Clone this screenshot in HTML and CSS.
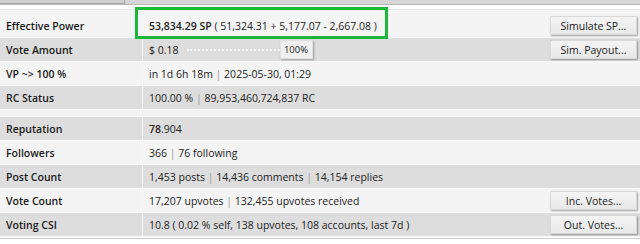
FILE: index.html
```html
<!DOCTYPE html>
<html>
<head>
<meta charset="utf-8">
<link rel="stylesheet" href="styles.css">
</head>
<body>
<div class="page">
  <div class="topbar"><div class="tab"></div></div>
  <div class="topgap"></div>
  <div class="table first">
    <div class="row light">
      <div class="label">Effective Power</div>
      <div class="value"><b>53,834.29 SP</b> ( 51,324.31 + 5,177.07 - 2,667.08 )</div>
      <div class="action"><button class="btn">Simulate SP...</button></div>
    </div>
    <div class="row dark">
      <div class="label">Vote Amount</div>
      <div class="value"><span>$ 0.18</span>
        <div class="slider"><div class="track"></div><div class="thumb">100%</div></div>
      </div>
      <div class="action"><button class="btn">Sim. Payout...</button></div>
    </div>
    <div class="row light">
      <div class="label">VP ~&gt; 100 %</div>
      <div class="value">in 1d 6h 18m <span class="sep">|</span> 2025-05-30, 01:29</div>
      <div class="action"></div>
    </div>
    <div class="row dark">
      <div class="label">RC Status</div>
      <div class="value">100.00 % <span class="sep">|</span> 89,953,460,724,837 RC</div>
      <div class="action"></div>
    </div>
  </div>
  <div class="spacer"></div>
  <div class="table">
    <div class="row dark">
      <div class="label">Reputation</div>
      <div class="value"><b>78</b>.904</div>
      <div class="action"></div>
    </div>
    <div class="row light">
      <div class="label">Followers</div>
      <div class="value">366 <span class="sep">|</span> 76 following</div>
      <div class="action"></div>
    </div>
    <div class="row dark">
      <div class="label">Post Count</div>
      <div class="value">1,453 posts <span class="sep">|</span> 14,436 comments <span class="sep">|</span> 14,154 replies</div>
      <div class="action"></div>
    </div>
    <div class="row light">
      <div class="label">Vote Count</div>
      <div class="value">17,207 upvotes <span class="sep">|</span> 132,455 upvotes received</div>
      <div class="action"><button class="btn">Inc. Votes...</button></div>
    </div>
    <div class="row dark">
      <div class="label">Voting CSI</div>
      <div class="value">10.8 ( 0.02 % self, 138 upvotes, 108 accounts, last 7d )</div>
      <div class="action"><button class="btn">Out. Votes...</button></div>
    </div>
  </div>
  <div class="bottomline"></div>
  <div class="highlight"></div>
</div>
</body>
</html>
```

FILE: styles.css
```css
html, body {
  margin: 0;
  padding: 0;
  background: #ffffff;
}
body {
  font-family: "Open Sans", "Liberation Sans", sans-serif;
  font-size: 10px;
  color: #222;
}
.page {
  position: relative;
  width: 640px;
}
.topbar {
  height: 4px;
  background: #d6d6d6;
  border-bottom: 1px solid #b9b9b9;
  display: flex;
}
.tab {
  width: 124px;
  height: 3px;
  border-right: 1px solid #aaa;
  border-bottom: 1px solid #a8a8a8;
  background: #d0d0d0;
}
.topgap {
  height: 4px;
  background: #fff;
  border-bottom: 1px solid #e6e6e6;
}
.table.first {
  padding-top: 4px;
  background: #f4f4f4;
}
.row {
  display: grid;
  grid-template-columns: 143px 1fr 104px;
  height: 23px;
  border-bottom: 1px solid #fafafa;
  align-items: stretch;
}
.row.light { background: #f4f4f4; }
.row.dark { background: #dddddd; }
.label {
  display: flex;
  align-items: center;
  padding-left: 6px;
  font-weight: 600;
  font-size: 10.5px;
  color: #1a1a1a;
  border-right: 1px solid #f7f7f7;
}
.value {
  display: flex;
  align-items: center;
  padding-left: 6px;
  white-space: pre;
  font-size: 10.5px;
}
.value b { font-weight: 600; }
.sep { color: #9a9a9a; }
.action {
  display: flex;
  align-items: center;
  justify-content: flex-end;
  padding-right: 3px;
}
.btn {
  width: 87px;
  height: 19px;
  padding: 0;
  font-family: "Open Sans", "Liberation Sans", sans-serif;
  font-size: 10.5px;
  color: #222;
  background: linear-gradient(#f4f4f4, #e8e8e8);
  border: 1px solid #d8d8d8;
  border-radius: 1px;
  box-shadow: 1px 1px 2px rgba(0,0,0,0.35);
}
.slider {
  display: flex;
  align-items: center;
  margin-left: 8px;
}
.track {
  width: 93px;
  height: 0;
  border-top: 2px dotted #f4f4f4;
}
.thumb {
  width: 31px;
  height: 17px;
  display: flex;
  align-items: center;
  justify-content: center;
  font-size: 9.5px;
  background: #f0f0f0;
  border: 1px solid #e0e0e0;
  box-shadow: 1px 1px 2px rgba(0,0,0,0.3);
}
.spacer {
  height: 6px;
  background: #f3f3f3;
  border-bottom: 1px solid #fdfdfd;
}
.bottomline {
  height: 1px;
  margin-top: 1px;
  background: #cfcfcf;
  box-shadow: 0 1px 1px rgba(0,0,0,0.08);
}
.highlight {
  position: absolute;
  left: 135px;
  top: 7px;
  width: 247px;
  height: 26px;
  border: 3px solid #1cb83a;
  pointer-events: none;
}
```
